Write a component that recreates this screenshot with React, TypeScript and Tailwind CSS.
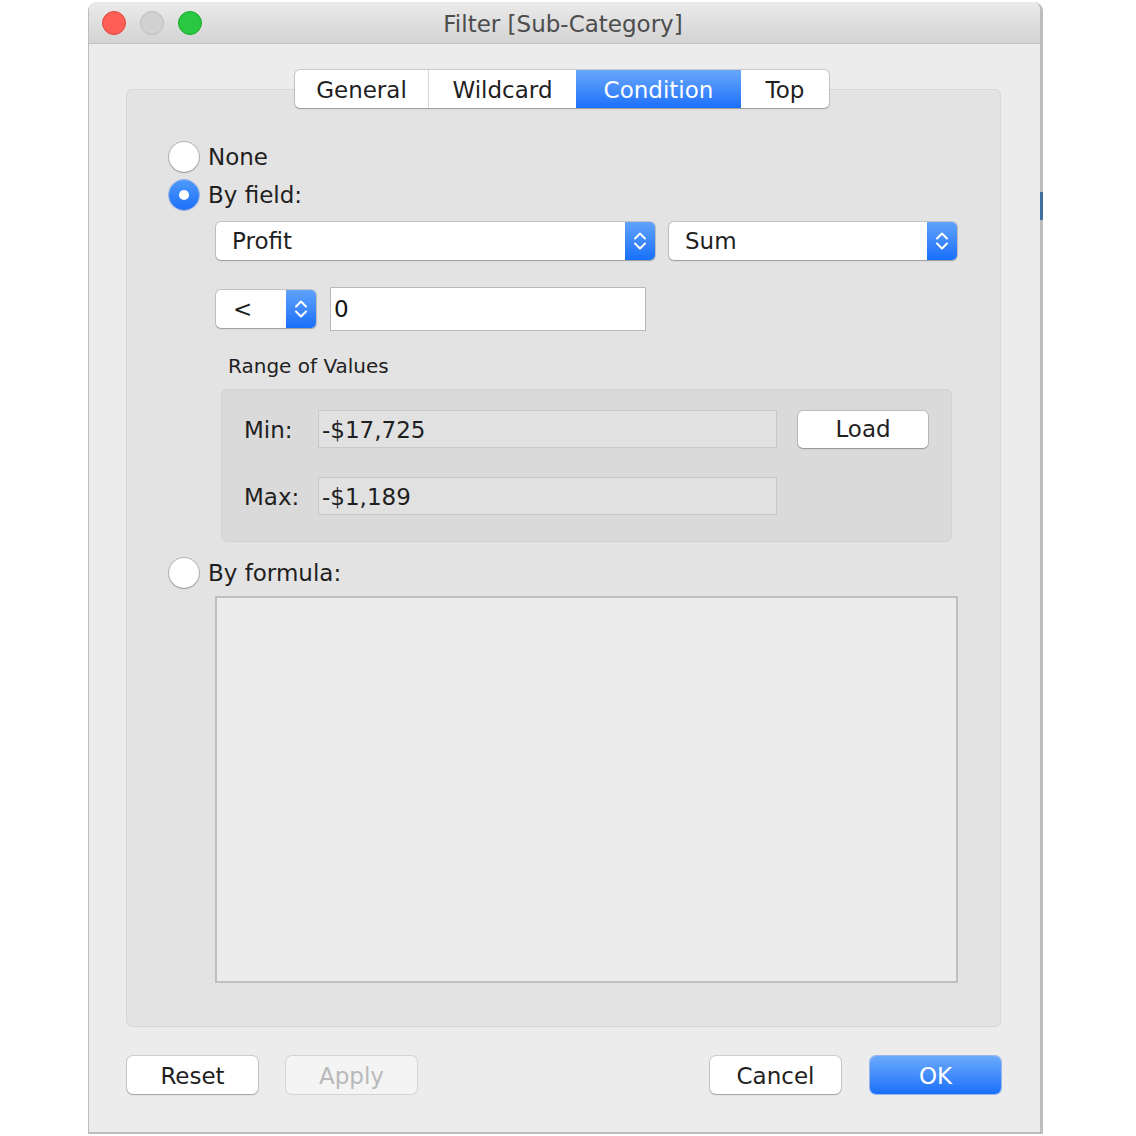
import React from 'react';

const ui = { fontFamily: '"DejaVu Sans", "Noto Sans", sans-serif' };

function Chevrons() {
  return (
    <svg width="30" height="38" viewBox="0 0 30 38" fill="none">
      <path d="M10 16.5 L15 11.5 L20 16.5" stroke="white" strokeWidth="2" strokeLinecap="round" strokeLinejoin="round" />
      <path d="M10 21.5 L15 26.5 L20 21.5" stroke="white" strokeWidth="2" strokeLinecap="round" strokeLinejoin="round" />
    </svg>
  );
}

function Select({ label, width, pad = 'pl-[16px]' }: { label: string; width: string; pad?: string }) {
  return (
    <div
      className={`flex h-[38px] ${width} items-stretch rounded-[5px] bg-white shadow-[0_0_0_1px_rgba(0,0,0,0.13),0_1px_1.5px_rgba(0,0,0,0.22)]`}
    >
      <div className={`flex flex-1 items-center ${pad} pt-[1px] text-[23px] text-[#1f1f1f]`}>{label}</div>
      <div className="flex w-[30px] items-center justify-center rounded-r-[5px] bg-gradient-to-b from-[#5fa2fb] to-[#176ffa]">
        <Chevrons />
      </div>
    </div>
  );
}

function Radio({ checked = false }: { checked?: boolean }) {
  if (checked) {
    return (
      <div className="flex h-[30px] w-[30px] shrink-0 items-center justify-center rounded-full bg-gradient-to-b from-[#4d98fb] to-[#1b6ef8] shadow-[0_0_0_1px_rgba(20,90,220,0.35)]">
        <div className="h-[10px] w-[10px] rounded-full bg-white" />
      </div>
    );
  }
  return (
    <div className="h-[30px] w-[30px] shrink-0 rounded-full bg-white shadow-[0_0_0_1px_rgba(0,0,0,0.18),0_1px_1.5px_rgba(0,0,0,0.2)]" />
  );
}

function Btn({ label, kind = 'normal' }: { label: string; kind?: 'normal' | 'disabled' | 'primary' }) {
  const base = 'flex h-[38px] w-[131px] items-center justify-center rounded-[6px] pt-[2px] text-[23px]';
  if (kind === 'primary') {
    return (
      <div className={`${base} bg-gradient-to-b from-[#6aa9fb] to-[#176ffa] text-white shadow-[0_0_0_1px_rgba(30,100,230,0.4)]`}>
        {label}
      </div>
    );
  }
  if (kind === 'disabled') {
    return (
      <div className={`${base} bg-[#f4f4f4] text-[#b9b9b9] shadow-[0_0_0_1px_rgba(0,0,0,0.1)]`}>{label}</div>
    );
  }
  return (
    <div className={`${base} bg-white text-[#1f1f1f] shadow-[0_0_0_1px_rgba(0,0,0,0.13),0_1px_1.5px_rgba(0,0,0,0.22)]`}>
      {label}
    </div>
  );
}

export default function App() {
  const tabs = [
    { label: 'General', w: 'w-[133px]' },
    { label: 'Wildcard', w: 'w-[148px]' },
    { label: 'Condition', w: 'w-[165px]', active: true },
    { label: 'Top', w: 'w-[88px]' },
  ];

  return (
    <div className="min-h-[1136px] w-[1136px] bg-white pt-[2px]" style={ui}>
      <div className="relative ml-[88px] flex h-[1132px] w-[955px] flex-col rounded-t-[9px] border-b-[2px] border-l border-r-[3px] border-[#bdbdbd] bg-[#ececec]">
        {/* stray blue mark on the right edge */}
        <div className="absolute right-[-3px] top-[190px] h-[28px] w-[3px] bg-[#3f6f9f]" />

        {/* title bar */}
        <div className="relative flex h-[42px] items-center rounded-t-[8px] border-b border-[#c2c2c2] bg-gradient-to-b from-[#ebebeb] to-[#d3d3d3] pl-[13px]">
          <div className="flex gap-[14px]">
            <div className="h-[24px] w-[24px] rounded-full border border-[#e1463f] bg-[#fd5f57]" />
            <div className="h-[24px] w-[24px] rounded-full border border-[#bdbdbd] bg-[#d1d1d1]" />
            <div className="h-[24px] w-[24px] rounded-full border border-[#1daa2c] bg-[#28c940]" />
          </div>
          <div className="flex-1 pr-[116px] pt-[3px] text-center text-[23px] text-[#4d4d4d]">Filter [Sub-Category]</div>
        </div>

        <div className="flex flex-col pl-[37px] pr-[39px] pt-[26px]">
          {/* tabs */}
          <div className="relative z-10 flex justify-center pr-[3px]">
            <div className="flex h-[38px] overflow-hidden rounded-[5px] bg-white shadow-[0_0_0_1px_rgba(0,0,0,0.14),0_1px_1.5px_rgba(0,0,0,0.2)]">
              {tabs.map((t, i) => (
                <div
                  key={t.label}
                  className={`flex ${t.w} items-center justify-center pt-[2px] text-[23px] ${
                    t.active
                      ? 'bg-gradient-to-b from-[#68a7fb] to-[#1a6ffa] text-white'
                      : 'text-[#1f1f1f]'
                  } ${i > 0 && !t.active && !tabs[i - 1].active ? 'border-l border-[#d6d6d6]' : ''}`}
                >
                  {t.label}
                </div>
              ))}
            </div>
          </div>

          {/* tab panel */}
          <div className="-mt-[19px] flex h-[938px] flex-col rounded-[6px] border border-[#d7d7d7] bg-[#e3e3e3] pl-[42px]">
            <div className="mt-[52px] flex h-[30px] items-center gap-[9px] text-[23px] text-[#1f1f1f]">
              <Radio />
              <span className="pt-[1px]">None</span>
            </div>
            <div className="mt-[8px] flex h-[30px] items-center gap-[9px] text-[23px] text-[#1f1f1f]">
              <Radio checked />
              <span className="pt-[1px]">By field:</span>
            </div>

            <div className="ml-[47px] mt-[12px] flex gap-[14px]">
              <Select label="Profit" width="w-[439px]" />
              <Select label="Sum" width="w-[288px]" />
            </div>

            <div className="ml-[47px] mt-[27px] flex h-[44px] items-center gap-[14px]">
              <Select label="<" width="w-[100px]" pad="pl-[17px]" />
              <div className="flex h-[44px] w-[316px] items-center border border-[#b9b9b9] bg-white pl-[3px] pt-[1px] text-[23px] text-[#111]">
                0
              </div>
            </div>

            <div className="ml-[59px] mt-[23px] h-[24px] text-[20px] leading-[24px] text-[#1f1f1f]">Range of Values</div>

            <div className="ml-[52px] mt-[11px] flex h-[153px] w-[731px] flex-col rounded-[6px] border border-[#d2d2d2] bg-[#dadada] pl-[22px] pt-[20px]">
              <div className="flex items-center">
                <div className="w-[74px] pt-[2px] text-[23px] text-[#1f1f1f]">Min:</div>
                <div className="flex h-[38px] w-[459px] items-center border border-[#c8c8c8] bg-[#e1e1e1] pl-[3px] pt-[2px] text-[23px] text-[#1f1f1f]">
                  -$17,725
                </div>
                <div className="ml-[21px] flex h-[37px] w-[130px] items-center justify-center rounded-[5px] bg-white pt-[1px] text-[23px] text-[#1f1f1f] shadow-[0_0_0_1px_rgba(0,0,0,0.13),0_1px_1.5px_rgba(0,0,0,0.22)]">
                  Load
                </div>
              </div>
              <div className="mt-[29px] flex items-center">
                <div className="w-[74px] pt-[2px] text-[23px] text-[#1f1f1f]">Max:</div>
                <div className="flex h-[38px] w-[459px] items-center border border-[#c8c8c8] bg-[#e1e1e1] pl-[3px] pt-[2px] text-[23px] text-[#1f1f1f]">
                  -$1,189
                </div>
              </div>
            </div>

            <div className="mt-[16px] flex h-[30px] items-center gap-[9px] text-[23px] text-[#1f1f1f]">
              <Radio />
              <span className="pt-[1px]">By formula:</span>
            </div>

            <div className="ml-[46px] mt-[8px] h-[387px] w-[743px] border-2 border-[#bfbfbf] bg-[#ececec]" />
          </div>

          {/* bottom buttons */}
          <div className="mt-[29px] flex items-center pl-[1px]">
            <Btn label="Reset" />
            <div className="ml-[28px]">
              <Btn label="Apply" kind="disabled" />
            </div>
            <div className="flex-1" />
            <Btn label="Cancel" />
            <div className="ml-[29px]">
              <Btn label="OK" kind="primary" />
            </div>
          </div>
        </div>
      </div>
    </div>
  );
}
